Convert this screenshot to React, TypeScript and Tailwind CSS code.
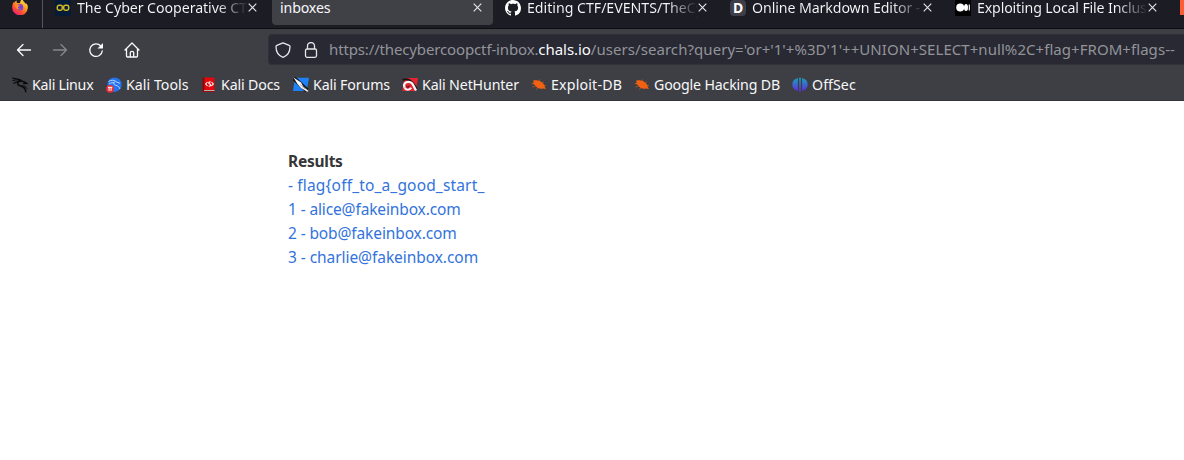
import type { ReactNode } from "react";

function Close() {
  return (
    <svg className="h-[9px] w-[9px] shrink-0" viewBox="0 0 9 9" fill="none" stroke="#e8e8ec" strokeWidth="1.1">
      <path d="M.7.7l7.6 7.6M8.3.7L.7 8.3" />
    </svg>
  );
}

function Tab({ icon, title, text, className }: { icon: ReactNode; title: string; text: string; className: string }) {
  return (
    <div className={`flex h-[15px] shrink-0 items-center ${className}`}>
      <div className="w-[21px] shrink-0">{icon}</div>
      <div className={`overflow-hidden whitespace-nowrap bg-gradient-to-r from-[#f7f7fa] from-82% to-[#f7f7fa]/0 bg-clip-text leading-5 text-transparent ${text}`}>{title}</div>
      <Close />
    </div>
  );
}

function Bookmark({ icon, label, className, text }: { icon: ReactNode; label: string; className: string; text: string }) {
  return (
    <div className={`flex shrink-0 items-center ${className}`}>
      <div className="w-5 shrink-0">{icon}</div>
      <span className={`whitespace-nowrap ${text}`}>{label}</span>
    </div>
  );
}

function Firefox() {
  return (
    <svg className="h-4 w-4" viewBox="0 0 16 16">
      <defs>
        <linearGradient id="fox" x1=".85" y1="0" x2=".2" y2="1">
          <stop offset="0" stopColor="#fff04a" />
          <stop offset=".4" stopColor="#ff9a22" />
          <stop offset=".7" stopColor="#ff4a35" />
          <stop offset="1" stopColor="#e31587" />
        </linearGradient>
      </defs>
      <path fill="url(#fox)" d="M15.8 7c-.4-1.3-1.2-2.5-2.1-3 .3.6.5 1.2.5 1.6C13 3.4 11 2.5 10.4 0 8.8 1 8 2.5 8 4L5.2 4C4.6 3.5 4.5 2.6 4.7 1.6 3.4 2.2 2.5 3.2 2.3 3.9L1.9 2.8C.8 4.3.2 6 .2 8.2A7.8 7.8 0 0 0 15.8 9z" />
      <circle cx="8" cy="8.2" r="3.2" fill="#7542d8" />
      <path fill="#ff8a28" d="M2.3 6.500c1.700-1.800 3-1.300 3.900-.3l2 .4c0 1-2 1-2.200 1.800 0 1 1.500 1.700 3 1-1 1.800-4.500 1.500-5.200-.8z" />
    </svg>
  );
}

function CyberCoop() {
  return (
    <svg className="h-4 w-4" viewBox="0 0 16 16">
      <rect width="16" height="16" fill="#061b38" />
      <path d="M4 5.200h1.600A1.700 1.700 0 0 1 7.300 6.900v1.600a1.700 1.700 0 0 1-1.700 1.700H4A1.700 1.700 0 0 1 2.300 8.500V6.900A1.700 1.700 0 0 1 4 5.200zM10.400 5.200H12a1.700 1.700 0 0 1 1.700 1.700v1.600a1.700 1.700 0 0 1-1.700 1.700h-1.600a1.700 1.700 0 0 1-1.700-1.700V6.900a1.700 1.700 0 0 1 1.700-1.700zM7 7.700h2" fill="none" stroke="#d1b91f" strokeWidth="1.5" />
    </svg>
  );
}

function GitHub() {
  return (
    <svg className="h-4 w-4" viewBox="0 0 16 16" fill="#fff">
      <path d="M8 0C3.58 0 0 3.58 0 8c0 3.54 2.29 6.53 5.47 7.59.4.07.55-.17.55-.38 0-.19-.01-.82-.01-1.49-2.01.37-2.53-.49-2.69-.94-.09-.23-.48-.94-.82-1.13-.28-.15-.68-.52-.01-.53.63-.01 1.08.58 1.23.82.72 1.21 1.87.87 2.33.66.07-.52.28-.87.51-1.07-1.78-.2-3.64-.89-3.64-3.95 0-.87.31-1.59.82-2.15-.08-.2-.36-1.02.08-2.12 0 0 .67-.21 2.2.82.64-.18 1.32-.27 2-.27s1.36.09 2 .27c1.53-1.04 2.2-.82 2.2-.82.44 1.1.16 1.92.08 2.12.51.56.82 1.27.82 2.15 0 3.07-1.87 3.75-3.65 3.95.29.25.54.73.54 1.48 0 1.07-.01 1.93-.01 2.2 0 .21.15.46.55.38A8.01 8.01 0 0 0 16 8c0-4.42-3.58-8-8-8z" />
    </svg>
  );
}

function Medium() {
  return (
    <svg className="h-4 w-4" viewBox="0 0 16 16" fill="#fff">
      <rect width="16" height="16" fill="#000" />
      <circle cx="5.2" cy="7.5" r="4" />
      <ellipse cx="11" cy="7.5" rx="2" ry="3.500" />
      <rect x="13.700" y="4.500" width="1.200" height="6" />
    </svg>
  );
}

function Dragon() {
  return (
    <svg className="h-4 w-4" viewBox="0 0 16 16" fill="none" stroke="#08080a" strokeLinecap="round">
      <path d="M.5 1C3 1.800 6 1 9 3.200M1 3.600C4 2.500 7 2.500 9 4.200M1.800 6.400C4 5 6 4.400 7.500 4.800" strokeWidth="1.100" />
      <path d="M8.500 3.500C4.500 4.500 5 8 8 8.700c3 .7 5.500 1.800 5.800 6M9 4l3.500.8 2 1.500-2.800.2" strokeWidth="1.400" />
      <path d="M10 8.800c2.500 0 4.200.8 5 2.700" strokeWidth=".9" />
    </svg>
  );
}

function Tools() {
  return (
    <svg className="h-4 w-4" viewBox="0 0 16 16">
      <circle cx="8.500" cy="7.700" r="7.200" fill="#2472ee" />
      <path d="M2.500 4.500c3-1.800 6-1.500 7.500 0M3 7c2-1.500 4-1.500 5.500-1M9 4.300c-2 1.500-1.500 3.700 1 4.100 2.500.3 3.500 2 3.800 3.500M10 4.800l4 1.500" fill="none" stroke="#b6d6ff" strokeWidth="1" />
      <circle cx="4" cy="11.800" r="3.900" fill="#e82c31" />
      <path d="M1.900 10.300h4.400M3.100 10.300v3.500M5.100 10.300v3.500" stroke="#fff" strokeWidth="1" />
    </svg>
  );
}

function Docs() {
  return (
    <svg className="h-4 w-4" viewBox="0 0 16 16">
      <path fill="#8e080b" d="M1.500.5h3v14.500h-3z" />
      <path fill="#e1090d" d="M3.500.5h10v13h-10z" />
      <path fill="#b9b0b1" d="M3 13h10.500v1H3z" />
      <path fill="#a40a0d" d="M1.500 14h12v1h-12z" />
      <path d="M6.500 5L4.700 7 6.500 9M10.500 5l1.800 2-1.800 2M9.700 4.800c-2.500 0-2.500 1.700-.9 2.200s1.200 2-1.200 2.200" fill="none" stroke="#fff" strokeWidth="1.100" />
    </svg>
  );
}

function Forums() {
  return (
    <svg className="h-4 w-4" viewBox="0 0 16 16">
      <path fill="#1e81f7" d="M2 .8h14L13.700 14H0z" />
      <path d="M.8 1.200L14 13.500" stroke="#17191e" strokeWidth="4.600" />
      <path d="M.5.5l4.200 2.700L8 5.500l2.200 4L15.500 14l-1.200.8L8 11 4.500 7z" fill="#f5f5f5" />
      <path d="M7 7.500l5 4.500" stroke="#8d9299" strokeWidth=".7" />
    </svg>
  );
}

function NetHunter() {
  return (
    <svg className="h-4 w-4" viewBox="0 0 16 16">
      <path fill="#e5242f" d="M2.500 1H16l-2.300 13H.3z" />
      <path d="M.5 3.200C5 .8 10.500 3 14.500 12" fill="none" stroke="#151519" strokeWidth="2" />
      <path d="M2.500 10.500C1 7 3.500 4.800 6.500 4.800c4 0 4.500 3 7.500 8.700" fill="none" stroke="#f6f6f6" strokeWidth="2.300" />
      <path d="M2.500 10.500c1 2.800 5 3 6.700.3" fill="none" stroke="#f6f6f6" strokeWidth="2.100" />
      <path d="M4.500 9.200c.8 1.300 2.500 1 3-.6" fill="none" stroke="#151519" strokeWidth="1" />
    </svg>
  );
}

function Bug() {
  return (
    <svg className="h-4 w-4" viewBox="0 0 16 16">
      <path d="M4.500 2.800L6 5M8.500 2.500l-.7 3M13 4.800l-2.500 1.500M.8 6.500h4M1.500 10l3.500-1.200M5.500 12.800L7 10M15 8.500h-3" fill="none" stroke="#a6532a" strokeWidth=".9" />
      <path fill="#f26011" d="M2 3.700c3.500-.8 7.500-.5 10.500 3.300 1 1.200 1.300 2 1.200 2.700l1.300 2.300-2.800-.5C9 12.500 5.500 11 3.800 8L1.300 6.300l1.500-.5z" />
    </svg>
  );
}

function OffSec() {
  return (
    <svg className="h-4 w-4" viewBox="0 0 16 16">
      <defs>
        <linearGradient id="off" x1="0" y1="0" x2="0" y2="1">
          <stop offset="0" stopColor="#18a5bd" />
          <stop offset="1" stopColor="#6027dd" />
        </linearGradient>
      </defs>
      <path fill="url(#off)" d="M5.900 1v12.800C2.300 13 .3 10.500.3 7.400S2.300 1.900 5.900 1zM10.100 1v12.800c3.600-.8 5.600-3.300 5.600-6.400S13.700 1.900 10.100 1zM7.200.5h1.600V15H7.200z" />
    </svg>
  );
}

const line = "block whitespace-nowrap";

export default function App() {
  return (
    <div className="h-[460px] w-[1184px] overflow-hidden bg-white font-['Noto_Sans',sans-serif] text-[14.2px]">
      <div className="flex h-7 items-start bg-[#1b1c24]">
        <div className="flex h-7 w-[43px] shrink-0 justify-end border-r border-[#54555c]">
          <div className="-mt-px mr-[14px]"><Firefox /></div>
        </div>
        <Tab icon={<div className="-ml-px"><CyberCoop /></div>} title="The Cyber Cooperative CTF" className="w-[229px] pl-[13px]" text="w-[171px] tracking-[-0.07px]" />
        <div className="flex h-[25px] w-[221px] shrink-0 items-start rounded-b bg-[#404147]">
          <div className="flex h-[15px] w-full items-center justify-between pl-2 pr-[11px] text-[#f7f7fa]">
            <span className="leading-5 tracking-[-0.15px]">inboxes</span>
            <Close />
          </div>
        </div>
        <Tab icon={<GitHub />} title="Editing CTF/EVENTS/TheCyber" className="w-[225px] pl-3" text="ml-px w-[171px] tracking-[-0.03px]" />
        <Tab icon={<div className="flex h-4 w-4 items-center justify-center rounded-sm bg-[#3d3e48] text-[14px] font-bold leading-4 text-white">D</div>} title="Online Markdown Editor - Dillinger" className="w-[225px] pl-3" text="ml-px w-[171px] tracking-[-0.1px]" />
        <Tab icon={<Medium />} title="Exploiting Local File Inclusion" className="w-[225px] pl-3" text="ml-px w-[171px] tracking-[-0.16px]" />
        <div className="h-[15px] flex-1 pl-3"><div className="h-[15px] w-4 bg-[#ff5c33]" /></div>
      </div>
      <div className="h-[73px] border-b border-t border-b-[#323238] border-t-[#0d0d12] bg-[#3e3f44]">
        <div className="flex h-[41px] items-center">
          <svg className="ml-[16px] h-4 w-4 shrink-0" viewBox="0 0 16 16" fill="none" stroke="#fbfbfe" strokeWidth="1.3" strokeLinecap="round" strokeLinejoin="round"><path d="M14.5 8H1.5M7 2.500L1.500 8 7 13.500" /></svg>
          <svg className="ml-5 h-4 w-4 shrink-0" viewBox="0 0 16 16" fill="none" stroke="#86878c" strokeWidth="1.3" strokeLinecap="round" strokeLinejoin="round"><path d="M1.5 8h13M9 2.500L14.500 8 9 13.500" /></svg>
          <svg className="ml-5 h-4 w-4 shrink-0" viewBox="0 0 16 16"><path d="M12.800 4A6.300 6.300 0 1 0 14.300 8.800" fill="none" stroke="#fbfbfe" strokeWidth="1.300" strokeLinecap="round" /><path d="M15 1v5.500H9.500z" fill="#fbfbfe" /></svg>
          <svg className="ml-5 h-4 w-4 shrink-0" viewBox="0 0 16 16" fill="none" stroke="#fbfbfe" strokeWidth="1.300" strokeLinecap="round" strokeLinejoin="round"><path d="M1 8l7-7 7 7M2.500 6.800V14q0 1 1 1h9q1 0 1-1V6.800M6.300 15v-4.500q0-1.200 1.700-1.200t1.700 1.200V15" /></svg>
          <div className="ml-[128px] flex h-[31px] flex-1 items-center rounded-l border border-r-0 border-[#303139] bg-[#282933]">
            <svg className="ml-[6px] h-4 w-4 shrink-0" viewBox="0 0 16 16" fill="none" stroke="#e6e6ea" strokeWidth="1.300" strokeLinejoin="round"><path d="M8 .8l6.200 2.500q.8.300.8 1.300C15 10 12 14 8 15.300 4 14 1 10 1 4.600q0-1 .8-1.300z" /></svg>
            <svg className="ml-3 h-4 w-4 shrink-0" viewBox="0 0 16 16" fill="none" stroke="#e6e6ea" strokeWidth="1.300"><rect x="2.500" y="7" width="11" height="8.300" rx="1.500" /><path d="M4.500 7V4a3.500 3.500 0 0 1 7 0v3" /></svg>
            <div className="-mt-px ml-[10px] whitespace-nowrap text-[15px] leading-5 text-[#93949a]">
              <span className="tracking-[-0.14px]">https://thecybercoopctf-inbox.</span>
              <span className="tracking-[-0.05px] text-[#fbfbfe]">chals.io</span>
              <span className="tracking-[0.055px]">/users/search?query='or+'1'+%3D'1'++UNION+SELECT+null%2C+flag+FROM+flags--</span>
            </div>
          </div>
        </div>
        <div className="flex h-[30px] items-center pl-3 leading-5 text-[#f7f7fa]">
          <Bookmark icon={<Dragon />} label="Kali Linux" className="w-[94px]" text="tracking-[-0.25px]" />
          <Bookmark icon={<Tools />} label="Kali Tools" className="w-[95px]" text="tracking-[0.03px]" />
          <Bookmark icon={<Docs />} label="Kali Docs" className="w-[92px]" text="tracking-[-0.15px]" />
          <Bookmark icon={<Forums />} label="Kali Forums" className="w-[109px]" text="tracking-[-0.13px]" />
          <Bookmark icon={<NetHunter />} label="Kali NetHunter" className="w-[129px]" text="tracking-[-0.13px]" />
          <Bookmark icon={<Bug />} label="Exploit-DB" className="w-[103px]" text="tracking-[0.18px]" />
          <Bookmark icon={<Bug />} label="Google Hacking DB" className="w-[158px]" text="tracking-[-0.17px]" />
          <Bookmark icon={<OffSec />} label="OffSec" className="w-[70px]" text="tracking-[0.05px]" />
        </div>
      </div>
      <main className="pl-72 pt-12 text-[15.5px] leading-6 text-[#3273dc]">
        <h1 className="font-bold tracking-[-0.25px] text-[#363636]">Results</h1>
        <a className={`${line} tracking-[0.16px]`}>- flag{"{"}off_to_a_good_start_</a>
        <a className={`${line} tracking-[-0.13px]`}>1 - alice@fakeinbox.com</a>
        <a className={`${line} tracking-[-0.12px]`}>2 - bob@fakeinbox.com</a>
        <a className={`${line} tracking-[-0.06px]`}>3 - charlie@fakeinbox.com</a>
      </main>
    </div>
  );
}
